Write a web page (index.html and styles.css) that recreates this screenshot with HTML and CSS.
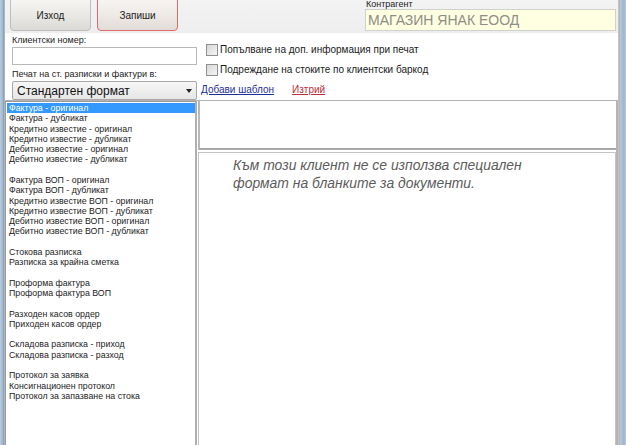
FILE: index.html
```html
<!DOCTYPE html>
<html>
<head>
<meta charset="utf-8">
<link rel="stylesheet" href="styles.css">
</head>
<body>
<div class="window">
  <div class="frame-left"></div>
  <div class="main">
    <div class="toolbar">
      <div class="btn">Изход</div>
      <div class="btn btn-active">Запиши</div>
      <div class="spacer"></div>
      <div class="contr">
        <div class="contr-label">Контрагент</div>
        <div class="contr-input">МАГАЗИН ЯНАК ЕООД</div>
      </div>
    </div>
    <div class="form">
      <div class="form-left">
        <div class="label">Клиентски номер:</div>
        <div class="textbox"></div>
        <div class="label label-2">Печат на ст. разписки и фактури в:</div>
        <div class="select"><span>Стандартен формат</span><span class="arrow"></span></div>
      </div>
      <div class="form-right">
        <div class="check"><span class="box"></span>Попълване на доп. информация при печат</div>
        <div class="check"><span class="box"></span>Подреждане на стоките по клиентски баркод</div>
        <div class="links"><span class="link">Добави шаблон</span><span class="link link-red">Изтрий</span></div>
      </div>
    </div>
    <div class="content">
      <div class="list">
        <div class="item selected">Фактура - оригинал</div>
        <div class="item">Фактура - дубликат</div>
        <div class="item">Кредитно известие - оригинал</div>
        <div class="item">Кредитно известие - дубликат</div>
        <div class="item">Дебитно известие - оригинал</div>
        <div class="item">Дебитно известие - дубликат</div>
        <div class="item"></div>
        <div class="item">Фактура ВОП - оригинал</div>
        <div class="item">Фактура ВОП - дубликат</div>
        <div class="item">Кредитно известие ВОП - оригинал</div>
        <div class="item">Кредитно известие ВОП - дубликат</div>
        <div class="item">Дебитно известие ВОП - оригинал</div>
        <div class="item">Дебитно известие ВОП - дубликат</div>
        <div class="item"></div>
        <div class="item">Стокова разписка</div>
        <div class="item">Разписка за крайна сметка</div>
        <div class="item"></div>
        <div class="item">Проформа фактура</div>
        <div class="item">Проформа фактура ВОП</div>
        <div class="item"></div>
        <div class="item">Разходен касов ордер</div>
        <div class="item">Приходен касов ордер</div>
        <div class="item"></div>
        <div class="item">Складова разписка - приход</div>
        <div class="item">Складова разписка - разход</div>
        <div class="item"></div>
        <div class="item">Протокол за заявка</div>
        <div class="item">Консигнационен протокол</div>
        <div class="item">Протокол за запазване на стока</div>
      </div>
      <div class="panel">
        <div class="panel-top"></div>
        <div class="panel-bottom">
          <div class="note">Към този клиент не се използва специален<br>формат на бланките за документи.</div>
        </div>
      </div>
    </div>
  </div>
  <div class="frame-right"></div>
</div>
</body>
</html>
```

FILE: styles.css
```css
html, body {
  margin: 0;
  padding: 0;
  width: 626px;
  height: 445px;
  overflow: hidden;
  background: #ffffff;
  font-family: "Liberation Sans", Arial, sans-serif;
  color: #1a1a1a;
}
.window {
  display: flex;
  width: 626px;
  height: 445px;
}
.frame-left {
  width: 5px;
  background: linear-gradient(to right, #b7cbe0 0, #9fb6cf 3px, #7f8fa0 4px, #d8dde3 5px);
  flex: none;
}
.frame-right {
  width: 8px;
  flex: none;
  background: linear-gradient(to right, #e4e4e4 0, #9ea6ae 1px, #c8c8c8 2px, #aec4da 3px, #9cb5cf 6px, #b9cce0 8px);
}
.main {
  flex: 1;
  display: flex;
  flex-direction: column;
  min-width: 0;
  background: #ffffff;
}
.toolbar {
  height: 33px;
  flex: none;
  display: flex;
  align-items: flex-start;
  background: linear-gradient(to bottom, #f3f3f3, #eeeeee);
  padding-left: 5px;
  gap: 6px;
}
.btn {
  width: 79px;
  height: 29px;
  margin-top: -2px;
  border: 1px solid #bdbdbd;
  border-radius: 0 0 4px 4px;
  background: linear-gradient(to bottom, #f7f6f4 0%, #ebe9e6 50%, #dcdad6 100%);
  font-size: 10px;
  color: #222;
  display: flex;
  align-items: center;
  justify-content: center;
  padding-top: 2px;
  box-sizing: content-box;
}
.btn-active {
  border-color: #e06a6a;
  background: linear-gradient(to bottom, #f8f4f2 0%, #eeeae6 50%, #e2dcd8 100%);
}
.spacer { flex: 1; }
.contr {
  width: 251px;
  margin-right: 2px;
  display: flex;
  flex-direction: column;
}
.contr-label {
  font-size: 9px;
  line-height: 10px;
  margin-top: -1px;
  padding-left: 1px;
  color: #222;
}
.contr-input {
  height: 20px;
  border: 1px solid #cfd2c8;
  background: #ffffe1;
  color: #8e8e86;
  font-size: 14px;
  line-height: 20px;
  padding-left: 2px;
}
.form {
  height: 67px;
  flex: none;
  display: flex;
  border-bottom: 1px solid #b4b4b4;
}
.form-left {
  width: 185px;
  padding-left: 7px;
  display: flex;
  flex-direction: column;
}
.label {
  font-size: 9px;
  line-height: 10px;
  margin-top: 2px;
  color: #222;
}
.label-2 { margin-top: 4px; }
.textbox {
  height: 17px;
  border: 1px solid #b9b9b9;
  margin-top: 2px;
  background: #fff;
}
.select {
  height: 18px;
  margin-top: 2px;
  border: 1px solid #a8a8a8;
  border-radius: 2px;
  background: linear-gradient(to bottom, #f7f7f7, #e6e6e6);
  display: flex;
  align-items: center;
  justify-content: space-between;
  padding: 0 4px 0 4px;
  font-size: 12px;
  color: #111;
}
.arrow {
  width: 0;
  height: 0;
  border-left: 3px solid transparent;
  border-right: 3px solid transparent;
  border-top: 4px solid #222;
}
.form-right {
  padding-left: 9px;
  display: flex;
  flex-direction: column;
}
.check {
  font-size: 10px;
  line-height: 13px;
  display: flex;
  align-items: center;
  color: #1a1a1a;
  margin-top: 10px;
}
.check + .check { margin-top: 7px; }
.box {
  width: 10px;
  height: 10px;
  border: 1px solid #8f8f8f;
  background: linear-gradient(135deg, #d8d8d8, #f4f4f4);
  margin-right: 2px;
  flex: none;
}
.links {
  margin-top: 7px;
  display: flex;
  gap: 18px;
  font-size: 10px;
  line-height: 13px;
  margin-left: -5px;
}
.link {
  color: #1f2f9a;
  text-decoration: underline;
}
.link-red { color: #c0303a; }
.content {
  flex: 1;
  display: flex;
  min-height: 0;
  gap: 1px;
}
.list {
  width: 188px;
  flex: none;
  border: 1px solid #9c9c9c;
  border-right: 2px solid #b0b0b0;
  border-bottom: none;
  padding: 1px 0 0 1px;
  background: #fff;
}
.item {
  font-size: 8.8px;
  line-height: 10.29px;
  height: 10.29px;
  padding-left: 2px;
  color: #1c1c1c;
  white-space: nowrap;
}
.item.selected {
  background: #3399ff;
  color: #ffffff;
}
.panel {
  flex: 1;
  display: flex;
  flex-direction: column;
  gap: 2px;
  border-right: 2px solid #b4b4b4;
}
.panel-top {
  height: 47px;
  flex: none;
  border-left: 2px solid #b8b8b8;
  border-bottom: 2px solid #a8a8a8;
  background: #fff;
}
.panel-bottom {
  flex: 1;
  border: 1px solid #c4c4c4;
  border-bottom: none;
  background: #fff;
  padding: 4px 0 0 34px;
}
.note {
  font-style: italic;
  font-size: 13.9px;
  line-height: 17.5px;
  color: #5c5c5c;
}
```
